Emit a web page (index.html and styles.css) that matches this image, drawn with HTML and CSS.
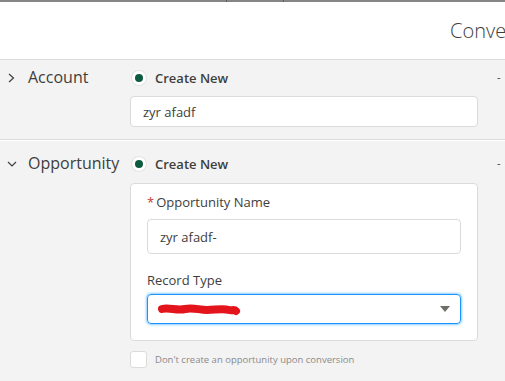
FILE: index.html
```html
<!DOCTYPE html>
<html lang="en">
<head>
  <meta charset="UTF-8">
  <title>Convert Lead</title>
  <link rel="stylesheet" href="styles.css">
</head>
<body>
  <div class="topbar"><span class="tick tick-a"></span><span class="tick tick-b"></span></div>

  <div class="header">
    <h2 class="title">Convert Lead</h2>
  </div>

  <div class="section account">
    <div class="row">
      <svg class="chevron" width="10" height="14" viewBox="0 0 10 14"><polyline points="3,3 7.5,7 3,11" fill="none" stroke="#3e3e3c" stroke-width="1.2"/></svg>
      <div class="name">Account</div>
      <div class="content">
        <label class="radio"><span class="dot"></span>Create New</label>
        <div class="input input-small">zyr afadf</div>
      </div>
      <div class="dash">-</div>
    </div>
  </div>

  <div class="section opportunity">
    <div class="row">
      <svg class="chevron" width="14" height="10" viewBox="0 0 14 10"><polyline points="3,3 7,7 11,3" fill="none" stroke="#3e3e3c" stroke-width="1.2"/></svg>
      <div class="name">Opportunity</div>
      <div class="content">
        <label class="radio"><span class="dot"></span>Create New</label>
        <div class="card">
          <div class="field-label"><span class="req">*</span>Opportunity Name</div>
          <div class="input input-name">zyr afadf-</div>
          <div class="field-label label-type">Record Type</div>
          <div class="select">
            <svg class="scribble" width="84" height="16" viewBox="0 0 84 16">
              <path d="M5,8 C12,6 20,10 28,8 C36,6 42,9 50,9 C58,9 66,7 72,9 C75,10 77,8 79,10" fill="none" stroke="#e3141c" stroke-width="8" stroke-linecap="round"/>
            </svg>
            <span class="caret"></span>
          </div>
        </div>
        <label class="check"><span class="box"></span>Don't create an opportunity upon conversion</label>
      </div>
      <div class="dash">-</div>
    </div>
  </div>
</body>
</html>
```

FILE: styles.css
```css
body {
  margin: 0;
  overflow: hidden;
  font-family: "Open Sans", Arial, sans-serif;
  color: #3e3e3c;
  background-color: #f3f3f3;
}

.topbar {
  height: 2px;
  background-color: #858585;
  position: relative;
}

.tick {
  position: absolute;
  top: 0;
  width: 1px;
  height: 2px;
  background-color: #5e5e5e;
}

.tick-a {
  left: 226px;
}

.tick-b {
  left: 283px;
}

.header {
  height: 57px;
  background-color: #fff;
  border-bottom: 1px solid #dddbda;
  overflow: hidden;
}

.title {
  margin: 0;
  padding-left: 450px;
  white-space: nowrap;
  font-size: 20px;
  font-weight: 300;
  line-height: 57px;
  color: #3e3e3c;
}

.section {
  border-bottom: 1px solid #dddbda;
}

.section + .section {
  border-top: 1px solid #fff;
}

.account {
  padding: 7px 0 12px;
}

.opportunity {
  padding: 12px 0 20px;
  border-bottom: none;
}

.row {
  display: grid;
  grid-template-columns: 28px 102px 348px 1fr;
  align-items: start;
}

.chevron {
  margin: 4px 0 0 6px;
}

.opportunity .chevron {
  margin: 6px 0 0 5px;
}

.name {
  font-size: 16px;
  line-height: 20px;
}

.dash {
  font-size: 11px;
  line-height: 20px;
  padding-left: 19px;
}

.radio {
  display: flex;
  align-items: center;
  height: 22px;
  font-size: 13px;
  font-weight: 600;
  color: #3e3e3c;
}

.dot {
  width: 8px;
  height: 8px;
  border-radius: 50%;
  background-color: #0d5c40;
  border: 3px solid #fff;
  box-shadow: 0 0 0 1px #e4e4e4;
  margin: 0 9px 0 2px;
}

.input {
  background-color: #fff;
  border: 1px solid #dddbda;
  border-radius: 4px;
  font-size: 13px;
  box-sizing: border-box;
  display: flex;
  align-items: center;
}

.input-small {
  margin-top: 7px;
  height: 31px;
  padding-left: 12px;
}

.card {
  margin-top: 8px;
  background-color: #fff;
  border: 1px solid #dddbda;
  border-radius: 4px;
  padding: 9px 16px 16px;
}

.field-label {
  font-size: 13px;
  line-height: 18px;
  color: #3e3e3c;
}

.req {
  color: #c23934;
  margin-right: 2px;
}

.input-name {
  margin-top: 8px;
  height: 35px;
  padding-left: 12px;
}

.label-type {
  margin-top: 17px;
}

.select {
  margin-top: 5px;
  height: 30px;
  border: 1px solid #1b96ff;
  border-radius: 4px;
  box-shadow: 0 0 3px #1b96ff;
  box-sizing: border-box;
  display: flex;
  align-items: center;
  justify-content: space-between;
  padding: 0 10px 0 9px;
}

.scribble {
  display: block;
}

.caret {
  width: 0;
  height: 0;
  border-left: 5px solid transparent;
  border-right: 5px solid transparent;
  border-top: 6px solid #706e6b;
}

.check {
  display: flex;
  align-items: center;
  margin-top: 10px;
  font-size: 9.5px;
  color: #8a8a8a;
}

.box {
  width: 15px;
  height: 15px;
  background-color: #fff;
  border: 1px solid #dddbda;
  border-radius: 3px;
  margin-right: 8px;
}
```
